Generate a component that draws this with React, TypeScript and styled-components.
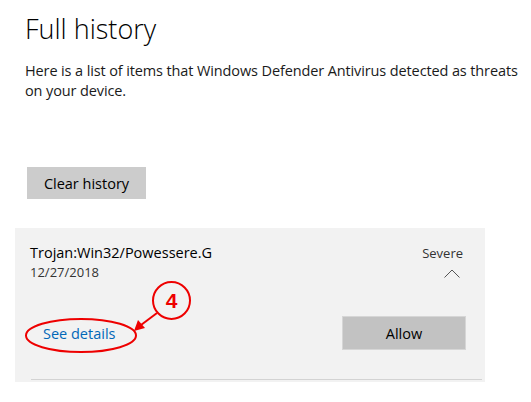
import React from "react";
import styled, { createGlobalStyle } from "styled-components";

const Global = createGlobalStyle`
  html, body { margin: 0; padding: 0; background: #ffffff; }
  body { font-family: "Open Sans", "Noto Sans", Arial, sans-serif; color: #000; }
`;

const Page = styled.div`
  position: relative;
  width: 531px;
  height: 402px;
  padding: 0 15px;
  box-sizing: border-box;
  overflow: hidden;
`;

const Header = styled.div`
  padding: 10px 0 0 10px;
`;

const Title = styled.h1`
  margin: 0;
  font-size: 27px;
  font-weight: 300;
  line-height: 38px;
  color: #000;
`;

const Intro = styled.p`
  margin: 13px 0 0;
  font-size: 14.5px;
  line-height: 20px;
  letter-spacing: -0.12px;
  color: #1a1a1a;
  width: 510px;
`;

const GreyButton = styled.button<{ $w: number; $h: number; $bg: string; $edge: string }>`
  width: ${(p) => p.$w}px;
  height: ${(p) => p.$h}px;
  background: ${(p) => p.$bg};
  border: 1px solid ${(p) => p.$edge};
  font-family: inherit;
  font-weight: 400;
  font-size: 14.5px;
  color: #000;
  padding: 0;
`;

const ClearWrap = styled.div`
  margin: 66px 0 0 2px;
`;

const Card = styled.div`
  margin-top: 29px;
  width: 470px;
  background: #f2f2f2;
  padding: 15px 19px 2px 15px;
  box-sizing: border-box;
`;

const HeaderRow = styled.div`
  display: flex;
  justify-content: space-between;
`;

const Name = styled.div`
  font-size: 14.5px;
  line-height: 20px;
  color: #000;
`;

const DateText = styled.div`
  font-size: 13px;
  line-height: 18px;
  color: #333;
`;

const Side = styled.div`
  display: flex;
  flex-direction: column;
  align-items: flex-end;
  padding-right: 3px;
`;

const Severity = styled.div`
  font-size: 13px;
  line-height: 20px;
  color: #333;
`;

const Chevron = styled.svg`
  margin-top: 6px;
  margin-right: 3px;
`;

const ActionRow = styled.div`
  display: flex;
  justify-content: space-between;
  align-items: center;
  margin-top: 35px;
`;

const Link = styled.a`
  margin-left: 13px;
  font-size: 14.5px;
  color: #0067b8;
  text-decoration: none;
`;

const Separator = styled.div`
  margin: 29px -16px 0 1px;
  height: 1px;
  background: #d3d3d3;
`;

const Overlay = styled.svg`
  position: absolute;
  left: 0;
  top: 0;
  pointer-events: none;
`;

export default function App() {
  return (
    <>
      <Global />
      <Page>
        <Header>
          <Title>Full history</Title>
          <Intro>
            Here is a list of items that Windows Defender Antivirus detected as threats on your device.
          </Intro>
          <ClearWrap>
            <GreyButton $w={119} $h={32} $bg="#cccccc" $edge="#cccccc">Clear history</GreyButton>
          </ClearWrap>
        </Header>
        <Card>
          <HeaderRow>
            <div>
              <Name>Trojan:Win32/Powessere.G</Name>
              <DateText>12/27/2018</DateText>
            </div>
            <Side>
              <Severity>Severe</Severity>
              <Chevron width="16" height="9" viewBox="0 0 16 9">
                <path d="M0.5 8.5 L8 1 L15.5 8.5" fill="none" stroke="#555" strokeWidth="1" />
              </Chevron>
            </Side>
          </HeaderRow>
          <ActionRow>
            <Link href="#">See details</Link>
            <GreyButton $w={124} $h={34} $bg="#c2c2c2" $edge="#d6d6d6">Allow</GreyButton>
          </ActionRow>
          <Separator />
        </Card>
        <Overlay width="531" height="402" viewBox="0 0 531 402">
          <ellipse cx="81" cy="335.5" rx="55" ry="16.5" fill="none" stroke="#ee0000" strokeWidth="2" />
          <circle cx="171.5" cy="300.5" r="18.5" fill="none" stroke="#ee0000" strokeWidth="2" />
          <text x="171.5" y="308" textAnchor="middle" fontFamily="Liberation Sans, Arial, sans-serif" fontWeight="700" fontSize="21" fill="#ee0000">4</text>
          <line x1="157" y1="313" x2="141" y2="325" stroke="#ee0000" strokeWidth="2" />
          <polygon points="134,331 138,320 145,328" fill="#ee0000" />
        </Overlay>
      </Page>
    </>
  );
}
